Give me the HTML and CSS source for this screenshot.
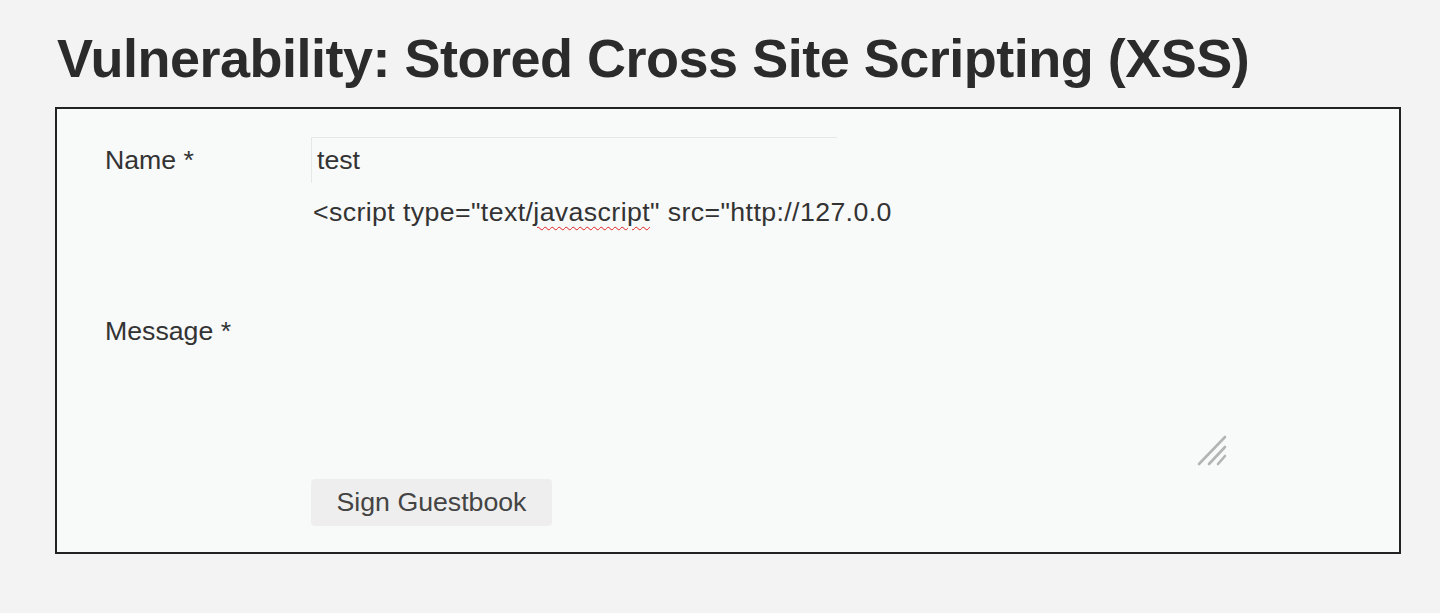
FILE: index.html
```html
<!DOCTYPE html>
<html lang="en">
<head>
<meta charset="utf-8">
<title>Vulnerability: Stored Cross Site Scripting (XSS)</title>
<link rel="stylesheet" href="styles.css">
</head>
<body>
<div class="page">
  <h1 class="title">Vulnerability: Stored Cross Site Scripting (XSS)</h1>
  <div class="vulnerable-code">
    <form class="guestform">
      <div class="label">Name *</div>
      <div class="field"><input class="name-input" type="text" value="test"></div>
      <div class="label">Message *</div>
      <div class="field">
        <div class="message-area">&lt;script type="text/<span class="misspelled">javascript</span>" src="http://127.0.0
          <svg class="resizer" width="30" height="32" viewBox="0 0 30 32">
            <line x1="2" y1="29" x2="28" y2="2" stroke="#b4b4b4" stroke-width="2.6" stroke-linecap="round"/>
            <line x1="12" y1="29" x2="28" y2="12" stroke="#b4b4b4" stroke-width="2.6" stroke-linecap="round"/>
            <line x1="21" y1="29" x2="28" y2="21" stroke="#b4b4b4" stroke-width="2.6" stroke-linecap="round"/>
          </svg>
        </div>
      </div>
      <div class="label"></div>
      <div class="field"><button class="sign-btn" type="button">Sign Guestbook</button></div>
    </form>
  </div>
</div>
</body>
</html>
```

FILE: styles.css
```css
html, body {
  margin: 0;
  padding: 0;
  background: #f3f3f3;
}
body {
  font-family: "Liberation Sans", Arial, sans-serif;
  color: #333;
}
.page {
  padding: 0 39px 0 55px;
}
.title {
  font-family: "Liberation Sans", Arial, sans-serif;
  font-weight: bold;
  font-size: 54px;
  line-height: 62px;
  letter-spacing: -0.5px;
  color: #2b2b2b;
  margin: 27px 0 18px 2px;
}
.vulnerable-code {
  border: 2px solid #222;
  background: #f8f9f9;
  padding: 28px 48px 26px 48px;
  height: 447px;
  box-sizing: border-box;
}
.guestform {
  display: grid;
  grid-template-columns: 206px 917px;
  grid-template-rows: 46px 276px 47px;
  row-gap: 10px;
  align-items: center;
}
.label {
  font-size: 26.7px;
  line-height: 30px;
  color: #333;
}
.field {
  height: 100%;
  display: flex;
  align-items: flex-start;
}
.name-input {
  width: 526px;
  height: 46px;
  box-sizing: border-box;
  border: none;
  border-top: 1px solid #e6e7e7;
  border-left: 1px solid #e6e7e7;
  background: #f8f9f9;
  font-family: "Liberation Sans", Arial, sans-serif;
  font-size: 26.7px;
  color: #333;
  padding: 0 5px;
  outline: none;
}
.message-area {
  position: relative;
  width: 917px;
  height: 276px;
  box-sizing: border-box;
  padding: 4px 2px 2px 2px;
  font-size: 26.7px;
  line-height: 30px;
  letter-spacing: 0.4px;
  color: #333;
  white-space: nowrap;
}
.misspelled {
  text-decoration: underline wavy #e02020;
  text-decoration-thickness: 1px;
  text-underline-offset: 5px;
}
.resizer {
  position: absolute;
  right: 1px;
  bottom: 2px;
}
.sign-btn {
  width: 241px;
  height: 47px;
  border: none;
  border-radius: 4px;
  background: #eeeeee;
  font-family: "Liberation Sans", Arial, sans-serif;
  font-size: 26.7px;
  color: #444;
  padding: 0;
}
```
